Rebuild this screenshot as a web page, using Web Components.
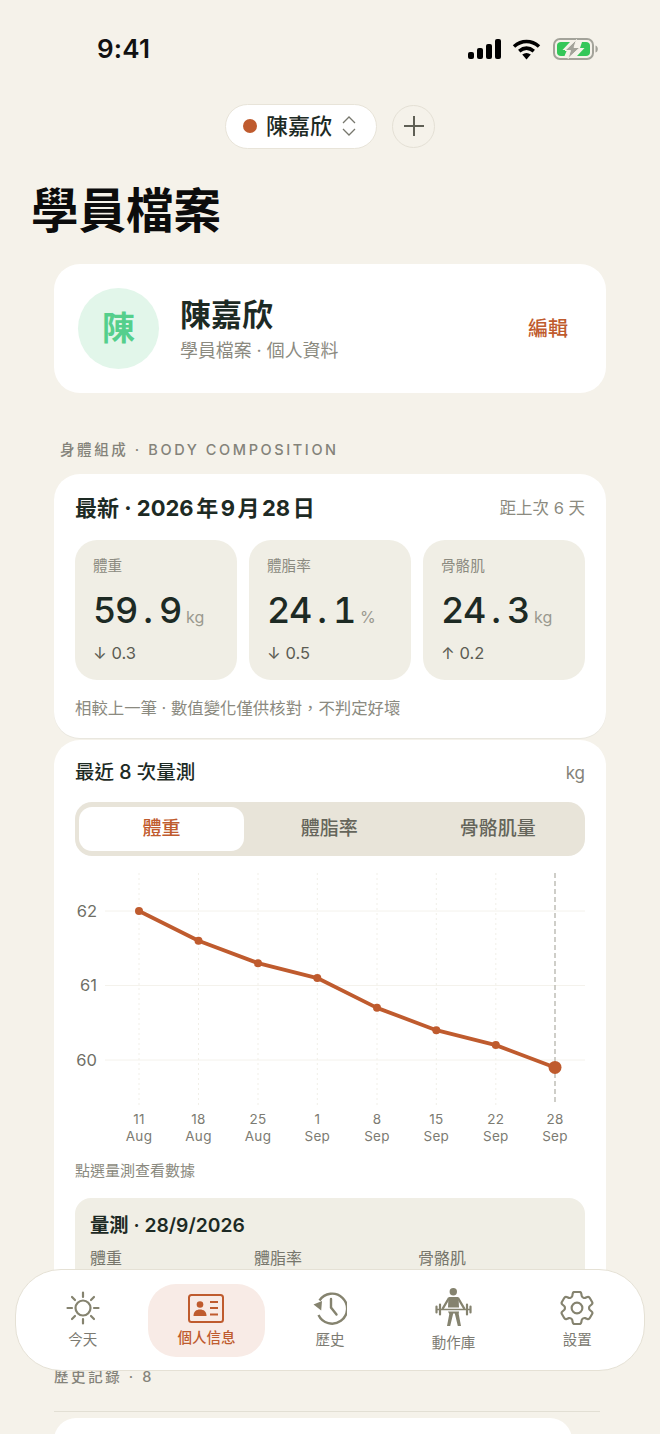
<!DOCTYPE html>
<html lang="zh-Hant">
<head>
<meta charset="utf-8">
<title>學員檔案</title>
<style>
  html, body { margin: 0; height: 1434px; overflow: hidden; background: #f5f2ea; }
  body { position: relative; font-family: Inter, "Noto Sans CJK TC", sans-serif; color: #1d2a24; }
</style>
</head>
<body>
<status-bar></status-bar>
<student-switcher name="陳嘉欣"></student-switcher>
<page-title>學員檔案</page-title>
<profile-card name="陳嘉欣" sub="學員檔案 · 個人資料"></profile-card>
<section-label style="margin-top:47px;margin-left:60px">身體組成 · BODY COMPOSITION</section-label>
<latest-card style="margin-top:14px">
  <metric-tile label="體重" whole="59" frac="9" unit="kg" delta="↓ 0.3"></metric-tile>
  <metric-tile label="體脂率" whole="24" frac="1" unit="%" delta="↓ 0.5"></metric-tile>
  <metric-tile label="骨骼肌" whole="24" frac="3" unit="kg" delta="↑ 0.2"></metric-tile>
</latest-card>
<trend-card></trend-card>
<section-label class="hist" style="margin-top:6px;margin-left:54px">歷史記錄 · 8</section-label>
<history-list></history-list>
<tab-bar></tab-bar>

<script>
class StatusBar extends HTMLElement {
  constructor() {
    super();
    this.attachShadow({mode: 'open'}).innerHTML = `<style>
      :host { display: flex; height: 103px; box-sizing: border-box; padding: 33px 62px 0 97px; justify-content: space-between; align-items: flex-start; }
      .time { font: 600 26px/32px Inter, sans-serif; color: #111; letter-spacing: .2px; }
      .icons { display: flex; align-items: center; gap: 11px; height: 32px; }
      .wifi { margin-right: 1px; }
      svg { display: block; }
    </style>
    <div class="time">9:41</div>
    <div class="icons">
      <svg width="33" height="20" viewBox="0 0 33 20"><rect x="0" y="13" width="6" height="7" rx="2"/><rect x="9" y="9" width="6" height="11" rx="2"/><rect x="18" y="5" width="6" height="15" rx="2"/><rect x="27" y="0" width="6" height="20" rx="2"/></svg>
      <svg class="wifi" width="29" height="21" viewBox="0 0 29 21"><path d="M2 7.5C9.6 .8 19.4 .8 27 7.5" fill="none" stroke="#000" stroke-width="3.6"/><path d="M7.2 12.2c4.6-3.8 10-3.8 14.6 0" fill="none" stroke="#000" stroke-width="3.6"/><path d="M10.2 15.6c2.8-2 5.8-2 8.6 0l-4.3 5z"/></svg>
      <svg width="45" height="22" viewBox="0 0 45 22"><rect x="1" y="1" width="39" height="20" rx="6" fill="none" stroke="#a3a39a" stroke-width="2"/><path d="M42.500 7.500c1.700.5 2.300 2 2.300 3.500s-.6 3-2.300 3.500z" fill="#a3a39a"/><path d="M8 4h9L9.500 12H14l-2.500 6H8c-2.500 0-4-1.300-4-3.500V7.500C4 5.300 5.500 4 8 4z" fill="#34c759"/><path d="M29 4h4c2.500 0 4 1.300 4 3.500v7c0 2.200-1.500 3.500-4 3.500h-9l7.500-8H27z" fill="#34c759"/><path d="M23.500 1.500 12 12.500h5.500L15 20.500 27 9.500h-6z" fill="#a3a39a" stroke="#f5f2ea" stroke-width="1"/></svg>
    </div>`;
  }
}
customElements.define('status-bar', StatusBar);

class StudentSwitcher extends HTMLElement {
  constructor() {
    super();
    this.attachShadow({mode: 'open'}).innerHTML = `<style>
      :host { display: flex; justify-content: center; align-items: center; gap: 15px; height: 46px; }
      .pill { display: flex; align-items: center; height: 45px; width: 152px; box-sizing: border-box; padding-left: 17px; background: #fff; border: 1px solid #e8e4d9; border-radius: 23px; }
      .dot { width: 14px; height: 14px; border-radius: 50%; background: #bf5b2e; }
      .name { margin-left: 9px; font: 500 22px/30px Inter, "Noto Sans CJK TC", sans-serif; color: #1d2a24; }
      .chev { margin-left: 10px; display: block; }
      .add { width: 43px; height: 43px; box-sizing: border-box; border: 1px solid #e4e0d5; border-radius: 50%; display: flex; align-items: center; justify-content: center; }
    </style>
    <div class="pill"><span class="dot"></span><span class="name">${this.getAttribute('name')}</span>
      <svg class="chev" width="14" height="22" viewBox="0 0 14 22" fill="none" stroke="#77776d" stroke-width="1.300"><path d="M1 8l6-6 6 6"/><path d="M1 14l6 6 6-6"/></svg>
    </div>
    <div class="add"><svg width="20" height="20" viewBox="0 0 20 20" stroke="#5f5f55" stroke-width="2" fill="none"><path d="M10 0v20M0 10h20"/></svg></div>`;
  }
}
customElements.define('student-switcher', StudentSwitcher);

class PageTitle extends HTMLElement {
  constructor() {
    super();
    this.attachShadow({mode: 'open'}).innerHTML = `<style>
      :host { display: block; margin: 32px 0 0 31px; font: 700 47.500px/60px Inter, "Noto Sans CJK TC", sans-serif; color: #0c0c0c; }
    </style><slot></slot>`;
  }
}
customElements.define('page-title', PageTitle);

class ProfileCard extends HTMLElement {
  constructor() {
    super();
    var name = this.getAttribute('name');
    this.attachShadow({mode: 'open'}).innerHTML = `<style>
      :host { display: flex; align-items: center; box-sizing: border-box; width: 552px; height: 129px; margin: 23px 0 0 54px; padding: 0 38px 0 24px; background: #fff; border-radius: 26px; }
      .avatar { width: 81px; height: 81px; border-radius: 50%; background: #e2f6ea; color: #55cf8c; display: flex; align-items: center; justify-content: center; font: 600 33px/1 Inter, "Noto Sans CJK TC", sans-serif; }
      .info { margin-left: 21px; flex: 1; padding-top: 2px; }
      .name { font: 600 31px/38px Inter, "Noto Sans CJK TC", sans-serif; color: #1d2a24; }
      .sub { font: 400 17.900px/24px Inter, "Noto Sans CJK TC", sans-serif; color: #8b8a80; margin-top: 5px; }
      .edit { font: 500 20px/28px Inter, "Noto Sans CJK TC", sans-serif; color: #bf5b2e; margin-top: 1px; }
    </style>
    <div class="avatar">${name[0]}</div>
    <div class="info"><div class="name">${name}</div><div class="sub">${this.getAttribute('sub')}</div></div>
    <div class="edit">編輯</div>`;
  }
}
customElements.define('profile-card', ProfileCard);

class SectionLabel extends HTMLElement {
  constructor() {
    super();
    this.attachShadow({mode: 'open'}).innerHTML = `<style>
      :host { display: block; font: 500 14.500px/20px Inter, "Noto Sans CJK TC", sans-serif; color: #84837a; letter-spacing: 2.600px; }
    </style><slot></slot>`;
  }
}
customElements.define('section-label', SectionLabel);

class MetricTile extends HTMLElement {
  constructor() {
    super();
    var a = (n) => this.getAttribute(n);
    var whole = a('whole').split('').map(c => `<i>${c}</i>`).join('');
    this.attachShadow({mode: 'open'}).innerHTML = `<style>
      :host { display: block; box-sizing: border-box; height: 140px; padding: 16px 18px 0; background: #f0eee5; border-radius: 22px; }
      .label { font: 400 14.600px/20px Inter, "Noto Sans CJK TC", sans-serif; color: #8b8a80; }
      .value { display: flex; align-items: baseline; margin-top: 12px; height: 44px; font: 500 36px/44px Inter, sans-serif; color: #1d2a24; font-variant-numeric: tabular-nums; }
      i { font-style: normal; width: 22px; }
      i.p { text-align: center; }
      .unit { margin-left: 5px; font: 400 16px/20px Inter, sans-serif; color: #9a998f; }
      .delta { margin-top: 9px; font: 400 16.500px/24px Inter, sans-serif; color: #5c5c53; }
    </style>
    <div class="label">${a('label')}</div>
    <div class="value">${whole}<i class="p">.</i><i>${a('frac')}</i><span class="unit">${a('unit')}</span></div>
    <div class="delta">${a('delta')}</div>`;
  }
}
customElements.define('metric-tile', MetricTile);

class LatestCard extends HTMLElement {
  constructor() {
    super();
    this.attachShadow({mode: 'open'}).innerHTML = `<style>
      :host { display: block; box-sizing: border-box; width: 552px; height: 264px; margin-left: 54px; padding: 19px 21px 0; background: #fff; border-radius: 26px; box-shadow: 0 1px 0 #e9e7df; }
      .head { display: flex; justify-content: space-between; align-items: center; height: 30px; }
      .title { font: 700 22px/30px Inter, "Noto Sans CJK TC", sans-serif; color: #1d2a24; }
      .title span { word-spacing: -2.700px; }
      .gap { font: 400 16.500px/24px Inter, "Noto Sans CJK TC", sans-serif; color: #8b8a80; }
      .tiles { display: grid; grid-template-columns: repeat(3, 1fr); gap: 12px; margin-top: 17px; }
      .note { margin-top: 16px; font: 400 16.400px/24px Inter, "Noto Sans CJK TC", sans-serif; color: #8b8a80; }
    </style>
    <div class="head"><div class="title">最新 · <span>2026 年 9 月 28 日</span></div><div class="gap">距上次 6 天</div></div>
    <div class="tiles"><slot></slot></div>
    <div class="note">相較上一筆 · 數值變化僅供核對，不判定好壞</div>`;
  }
}
customElements.define('latest-card', LatestCard);

class SegTabs extends HTMLElement {
  constructor() {
    super();
    var items = this.getAttribute('items').split(',');
    this.attachShadow({mode: 'open'}).innerHTML = `<style>
      :host { display: grid; grid-template-columns: 165px 1fr 1fr; gap: 2px; height: 54px; box-sizing: border-box; padding: 5px 4px; background: #e8e4d9; border-radius: 17px; margin-top: 16px; }
      div { display: flex; align-items: center; justify-content: center; font: 500 19px/24px Inter, "Noto Sans CJK TC", sans-serif; color: #65655b; border-radius: 13px; }
      .on { background: #fff; color: #bf5b2e; }
    </style>` + items.map((t, i) => `<div class="${i == 0 ? 'on' : ''}">${t}</div>`).join('');
  }
}
customElements.define('seg-tabs', SegTabs);

class WeightChart extends HTMLElement {
  constructor() {
    super();
    var vals = [62, 61.6, 61.3, 61.1, 60.7, 60.4, 60.2, 59.9];
    var xs = [139, 198.5, 258, 317.300, 377, 436.300, 495.800, 555];
    var days = [['11','Aug'],['18','Aug'],['25','Aug'],['1','Sep'],['8','Sep'],['15','Sep'],['22','Sep'],['28','Sep']];
    var yOf = (v) => 911 + (62 - v) * 74.500;
    var s = '';
    [62, 61, 60].forEach(v => {
      s += `<line x1="105" x2="585" y1="${yOf(v)}" y2="${yOf(v)}" stroke="#f4f2ec"/>`;
      s += `<text x="97" y="${yOf(v) + 5.500}" text-anchor="end" class="y">${v}</text>`;
    });
    xs.forEach((x, i) => {
      if (i < 7) s += `<line x1="${x}" x2="${x}" y1="873" y2="1105" stroke="#f1efe8" stroke-dasharray="2 3"/>`;
      s += `<text x="${x}" y="1124" text-anchor="middle" class="x">${days[i][0]}</text><text x="${x}" y="1140.500" text-anchor="middle" class="x">${days[i][1]}</text>`;
    });
    s += `<line x1="555" x2="555" y1="873" y2="1105" stroke="#b5b4ac" stroke-width="1.300" stroke-dasharray="5 3"/>`;
    s += `<polyline fill="none" stroke="#bf5b2e" stroke-width="3.800" stroke-linejoin="round" points="${xs.map((x, i) => x + ',' + yOf(vals[i])).join(' ')}"/>`;
    xs.forEach((x, i) => {
      s += `<circle cx="${x}" cy="${yOf(vals[i])}" r="${i == 7 ? 6.500 : 4}" fill="#bf5b2e"/>`;
    });
    this.attachShadow({mode: 'open'}).innerHTML = `<style>
      :host { display: block; margin-top: 14px; height: 280px; }
      svg { display: block; }
      .y { font: 400 16.500px Inter, sans-serif; fill: #6f6f66; }
      .x { font: 400 13.500px Inter, sans-serif; fill: #7c7b72; letter-spacing: .3px; }
    </style><svg width="510" height="280" viewBox="75 870 510 280">${s}</svg>`;
  }
}
customElements.define('weight-chart', WeightChart);

class TrendCard extends HTMLElement {
  constructor() {
    super();
    this.attachShadow({mode: 'open'}).innerHTML = `<style>
      :host { display: block; box-sizing: border-box; width: 552px; height: 621px; margin: 2px 0 0 54px; padding: 19px 21px 0; background: #fff; border-radius: 26px; }
      .head { display: flex; justify-content: space-between; align-items: center; height: 27px; }
      .title { font: 500 19.500px/27px Inter, "Noto Sans CJK TC", sans-serif; color: #1d2a24; }
      .unit { font: 400 17px/24px Inter, sans-serif; color: #84837a; }
      .hint { margin-top: 10px; font: 400 15px/22px Inter, "Noto Sans CJK TC", sans-serif; color: #8b8a80; }
      .detail { margin-top: 16px; height: 150px; box-sizing: border-box; padding: 13px 15px; background: #f0eee5; border-radius: 16px; }
      .dt { font: 600 19.300px/28px Inter, "Noto Sans CJK TC", sans-serif; color: #1d2a24; }
      .cols { display: grid; grid-template-columns: repeat(3, 164px); margin-top: 8px; font: 400 16px/22px Inter, "Noto Sans CJK TC", sans-serif; color: #77766c; }
    </style>
    <div class="head"><div class="title">最近 8 次量測</div><div class="unit">kg</div></div>
    <seg-tabs items="體重,體脂率,骨骼肌量"></seg-tabs>
    <weight-chart></weight-chart>
    <div class="hint">點選量測查看數據</div>
    <div class="detail"><div class="dt">量測 · 28/9/2026</div>
      <div class="cols"><div>體重</div><div>體脂率</div><div>骨骼肌</div></div>
    </div>`;
  }
}
customElements.define('trend-card', TrendCard);

class HistoryList extends HTMLElement {
  constructor() {
    super();
    this.attachShadow({mode: 'open'}).innerHTML = `<style>
      :host { display: block; width: 546px; margin: 24px 0 0 54px; border-top: 1px solid #e2dfd4; padding-top: 6px; }
      .row { width: 518px; height: 80px; background: #fff; border-radius: 22px; }
    </style><div class="row"></div>`;
  }
}
customElements.define('history-list', HistoryList);

class TabBar extends HTMLElement {
  constructor() {
    super();
    var tabs = [
      ['今天', `<svg width="34" height="34" viewBox="0 0 34 34" fill="none" stroke="currentColor" stroke-width="2.200" stroke-linecap="round"><circle cx="17" cy="17" r="7.500"/><path d="M17 1.500v4.500M17 28v4.500M1.500 17H6M28 17h4.500M6 6l3 3M25 25l3 3M28 6l-3 3M9 25l-3 3"/></svg>`],
      ['個人信息', `<svg width="36" height="29" viewBox="0 0 36 29" fill="none" stroke="currentColor" stroke-width="2"><rect x="1" y="1" width="34" height="27" rx="2.500"/><circle cx="12" cy="10.500" r="3.300" fill="currentColor" stroke="none"/><path d="M5.500 22c0-4.500 2.800-6.500 6.500-6.500s6.500 2 6.500 6.500z" fill="currentColor" stroke="none"/><path d="M22 8h8M22 14h8M22 20.500h8"/></svg>`],
      ['歷史', `<svg width="34" height="34" viewBox="0 0 34 34" fill="none" stroke="currentColor" stroke-width="2.400"><path d="M6.500 9.500A15 15 0 1 1 5.500 24"/><path d="M0.500 13.500 9 10l-.8 9.500z" fill="currentColor" stroke="none"/><path d="M18 8v8.500l5.500 7" stroke-linecap="round"/></svg>`],
      ['動作庫', `<svg width="37" height="40" viewBox="0 0 37 40" fill="none" stroke="currentColor"><circle cx="18.300" cy="3.700" r="3.700" fill="currentColor" stroke="none"/><path d="M13.500 9h10l.5 10.500H13z" fill="currentColor" stroke="none"/><path d="M14 10 7.500 21M23 10l6.500 11" stroke-width="2.400"/><path d="M1 21.500h35" stroke-width="1.600"/><path d="M1.500 18.500v6M5 16.500v10M32 16.500v10M35.500 18.500v6" stroke-width="2.200" stroke-linecap="round"/><path d="M13 23.500h11l-.3 2.500 2.300 12h-3.200l-3-12.500h-1.600l-3 12.500H12l2.300-12z" fill="currentColor" stroke="none"/></svg>`],
      ['設置', `<svg width="34" height="34" viewBox="2.500 2.500 19 19" fill="none" stroke="currentColor" stroke-width="1.200" stroke-linejoin="round"><circle cx="12" cy="12" r="3"/><path d="M9.594 3.940c.09-.542.56-.94 1.110-.94h2.593c.55 0 1.020.398 1.110.94l.213 1.281c.063.374.313.686.645.870.074.040.147.083.22.127.325.196.72.257 1.075.124l1.217-.456a1.125 1.125 0 0 1 1.370.49l1.296 2.247a1.125 1.125 0 0 1-.26 1.431l-1.003.827c-.293.241-.438.613-.43.992a7.723 7.723 0 0 1 0 .255c-.008.378.137.75.43.991l1.004.827c.424.35.534.955.26 1.430l-1.298 2.247a1.125 1.125 0 0 1-1.369.491l-1.217-.456c-.355-.133-.75-.072-1.076.124a6.470 6.470 0 0 1-.22.128c-.331.183-.581.495-.644.869l-.213 1.281c-.09.543-.56.94-1.110.94h-2.594c-.55 0-1.019-.398-1.110-.94l-.213-1.281c-.062-.374-.312-.686-.644-.87a6.520 6.520 0 0 1-.22-.127c-.325-.196-.72-.257-1.076-.124l-1.217.456a1.125 1.125 0 0 1-1.369-.49l-1.297-2.247a1.125 1.125 0 0 1 .26-1.431l1.004-.827c.292-.24.437-.613.43-.991a6.932 6.932 0 0 1 0-.255c.007-.38-.138-.751-.43-.992l-1.004-.827a1.125 1.125 0 0 1-.26-1.430l1.297-2.247a1.125 1.125 0 0 1 1.370-.491l1.216.456c.356.133.751.072 1.076-.124.072-.044.146-.086.22-.128.332-.183.582-.495.644-.869l.214-1.280Z"/></svg>`],
    ];
    var html = tabs.map((t, i) => `<div class="tab ${i == 1 ? 'on' : ''}">${t[1]}<span>${t[0]}</span></div>`).join('');
    this.attachShadow({mode: 'open'}).innerHTML = `<style>
      :host { position: absolute; left: 15px; top: 1269px; width: 630px; height: 102px; box-sizing: border-box; display: grid; grid-template-columns: repeat(5, 1fr); align-items: center; padding: 0 5px; background: #fff; border: 1px solid #e5e1d5; border-radius: 46px; }
      .tab { display: flex; flex-direction: column; align-items: center; justify-content: center; gap: 6px; height: 73px; color: #85836f; }
      .tab span { font: 400 14.500px/18px Inter, "Noto Sans CJK TC", sans-serif; color: #7c7b72; }
      .tab.on { background: #f8ebe6; border-radius: 28px; color: #bf5b2e; width: 117px; justify-self: center; }
      .tab.on span { color: #bf5b2e; font-weight: 500; }
      svg { display: block; }
    </style>${html}`;
  }
}
customElements.define('tab-bar', TabBar);
</script>
</body>
</html>
